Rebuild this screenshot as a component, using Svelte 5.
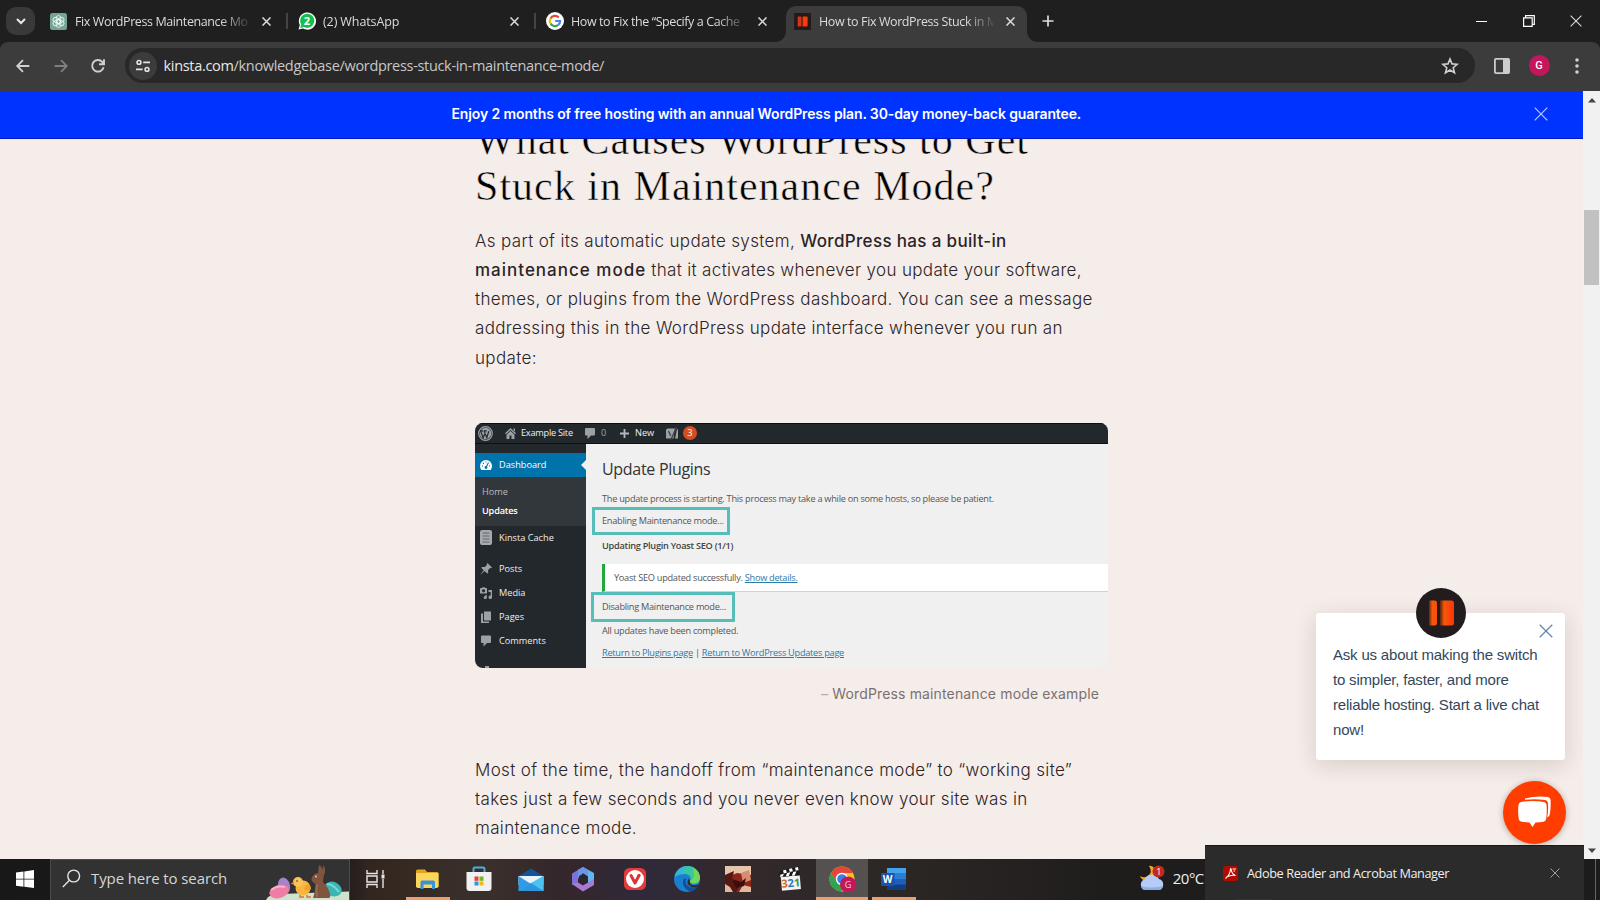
<script>
    const tabs = [
        { icon: 'gpt', title: 'Fix WordPress Maintenance Mo' },
        { icon: 'whatsapp', title: '(2) WhatsApp' },
        { icon: 'google', title: 'How to Fix the “Specify a Cache' },
        { icon: 'kinsta', title: 'How to Fix WordPress Stuck in M', active: true },
    ];

    const menu = ['Posts', 'Media', 'Pages', 'Comments'];

    const apps = [
        { name: 'taskview' },
        { name: 'explorer', open: true },
        { name: 'store' },
        { name: 'mail' },
        { name: 'office' },
        { name: 'vivaldi' },
        { name: 'edge' },
        { name: 'photo' },
        { name: 'player' },
        { name: 'chrome', open: true, focused: true },
        { name: 'word', open: true },
    ];
</script>

{#snippet cross(size, width)}
    <svg width={size} height={size} viewBox="0 0 10 10" fill="none" stroke="currentColor" stroke-width={width}><path d="M.5.5l9 9M9.5.5l-9 9"/></svg>
{/snippet}

<div class="screen">
    <header class="tabstrip">
        <div class="tab-search">
            <svg width="10" height="7" viewBox="0 0 10 7" fill="none" stroke="#e8e8e8" stroke-width="2"><path d="M1 1l4 4 4-4"/></svg>
        </div>
        {#each tabs as tab}
            <div class="tab" class:tab--active={tab.active}>
                <div class="tab__icon">
                    {#if tab.icon === 'gpt'}
                        <svg width="17" height="17" viewBox="0 0 17 17"><rect width="17" height="17" rx="2.5" fill="#74a594"/><g fill="none" stroke="#e6f3ee" stroke-width=".9"><rect x="6.2" y="2.6" width="4.6" height="7.6" rx="2.3"/><rect x="6.2" y="2.6" width="4.6" height="7.6" rx="2.3" transform="rotate(60 8.5 8.5)"/><rect x="6.2" y="2.6" width="4.6" height="7.6" rx="2.3" transform="rotate(120 8.5 8.5)"/><rect x="6.2" y="2.6" width="4.6" height="7.6" rx="2.3" transform="rotate(180 8.5 8.5)"/><rect x="6.2" y="2.6" width="4.6" height="7.6" rx="2.3" transform="rotate(240 8.5 8.5)"/><rect x="6.2" y="2.6" width="4.6" height="7.6" rx="2.3" transform="rotate(300 8.5 8.5)"/></g></svg>
                    {:else if tab.icon === 'whatsapp'}
                        <svg width="18" height="18" viewBox="0 0 18 18"><path d="M.5 17.5L1.8 13A8.6 8.6 0 1 1 5 16.4z" fill="#fff"/><circle cx="9.2" cy="8.8" r="7.1" fill="#16bf4c"/><path d="M2.2 15.9l1-4 3 3z" fill="#16bf4c"/><text x="9" y="12.7" text-anchor="middle" font-size="11" font-weight="700" fill="#fff">2</text></svg>
                    {:else if tab.icon === 'google'}
                        <svg width="18" height="18" viewBox="0 0 18 18"><circle cx="9" cy="9" r="9" fill="#fff"/><g fill="none" stroke-width="2.2"><path d="M4.6 6.4A5.1 5.1 0 0 1 12.7 5.4" stroke="#ea4335"/><path d="M4.6 11.6a5.1 5.1 0 0 1 0-5.2" stroke="#fbbc05"/><path d="M12.4 12.8a5.1 5.1 0 0 1-7.8-1.2" stroke="#34a853"/><path d="M9.2 9h4.9a5.1 5.1 0 0 1-1.7 3.8" stroke="#4285f4"/></g></svg>
                    {:else}
                        <svg width="17" height="17" viewBox="0 0 17 17"><rect width="17" height="17" fill="#25191b"/><path d="M3.7 3.4h2.7q1.1 0 1.1 1.1v8q0 1.1-1.1 1.1H3.7z" fill="#d63413"/><path d="M8.6 3.4h4q1 0 1 1v8.2q0 1-1 1h-4z" fill="#f93a0c"/></svg>
                    {/if}
                </div>
                <span class="tab__title">{tab.title}</span>
                <span class="tab__close">{@render cross(9, 1.7)}</span>
            </div>
        {/each}
        <svg class="tab-new" width="12" height="12" viewBox="0 0 12 12" stroke="#ddd" stroke-width="1.7"><path d="M6 .5v11M.5 6h11"/></svg>
        <div class="window-buttons">
            <svg width="11" height="11" viewBox="0 0 11 11" stroke="#fff"><path d="M0 5.5h11"/></svg>
            <svg width="12" height="12" viewBox="0 0 12 12" fill="none" stroke="#fff" stroke-width="1.2"><path d="M.6 2.8h8.6v8.6H.6zM2.6 2.8V.7h8.7v8.6H9.2"/></svg>
            {@render cross(12, .9)}
        </div>
    </header>

    <div class="toolbar">
        <svg class="nav" width="20" height="20" viewBox="0 0 20 20" fill="none" stroke="#d0d0d0" stroke-width="1.8"><path d="M16.3 10H4.5M10 4.2L4.2 10l5.8 5.8"/></svg>
        <svg class="nav" width="20" height="20" viewBox="0 0 20 20" fill="none" stroke="#7f7f7f" stroke-width="1.8"><path d="M3.7 10h11.8M10 4.2l5.8 5.8-5.8 5.8"/></svg>
        <svg class="nav" width="20" height="20" viewBox="0 0 20 20" fill="none" stroke="#d0d0d0" stroke-width="1.9"><path d="M15.6 11.2A5.8 5.8 0 1 1 14.2 5.8L16 7.8M16 3.2v5h-5"/></svg>
        <div class="omnibox">
            <div class="omnibox__site">
                <svg width="14" height="14" viewBox="0 0 14 14" fill="none" stroke="#e3e3e3" stroke-width="1.6"><circle cx="3" cy="3.4" r="1.9"/><path d="M7.2 3.4H14M0 10.4h6.6"/><circle cx="11" cy="10.4" r="1.9"/></svg>
            </div>
            <span class="omnibox__url"><b>kinsta.com</b>/knowledgebase/wordpress-stuck-in-maintenance-mode/</span>
            <svg width="18" height="18" viewBox="0 0 18 18" fill="none" stroke="#d0d0d0" stroke-width="1.6"><path d="M9 2l2 4.9 5.2.4-4 3.4 1.3 5.1L9 13l-4.5 2.8 1.3-5.1-4-3.4L7 6.9z"/></svg>
        </div>
        <svg class="panel" width="16" height="16" viewBox="0 0 16 16"><rect x=".9" y=".9" width="14.2" height="14.2" rx="1" fill="none" stroke="#ccc" stroke-width="1.8"/><path d="M9 1h6v14H9z" fill="#ccc"/></svg>
        <div class="avatar">G</div>
        <svg class="dots" width="4" height="16" viewBox="0 0 4 16" fill="#d0d0d0"><circle cx="2" cy="2" r="1.8"/><circle cx="2" cy="8" r="1.8"/><circle cx="2" cy="14" r="1.8"/></svg>
    </div>

    <div class="viewport">
        <main class="page">
            <div class="banner">
                <span class="banner__text">Enjoy 2 months of free hosting with an annual WordPress plan. 30-day money-back guarantee.</span>
                <span class="banner__close">{@render cross(14, .8)}</span>
            </div>

            <article>
                <h2>What Causes WordPress to Get<br>Stuck in Maintenance Mode?</h2>
                <p>
                    As part of its automatic update system, <strong>WordPress has a built-in</strong><br>
                    <strong class="wide">maintenance mode</strong> that it activates whenever you update your software,<br>
                    themes, or plugins from the WordPress dashboard. You can see a message<br>
                    addressing this in the WordPress update interface whenever you run an<br>
                    update:
                </p>

                <figure>
                    <div class="wp">
                        <div class="wp__bar">
                            <svg width="15" height="15" viewBox="0 0 15 15"><circle cx="7.5" cy="7.5" r="6.8" fill="none" stroke="#9ca1a6" stroke-width="1.2"/><circle cx="7.5" cy="7.5" r="5.7" fill="#9ca1a6"/><path d="M2.5 4.8l2.7 7 2-5.2M6 4.8l2.8 7 2-6.5M2 4.9h3M5.6 4.9h3.2" fill="none" stroke="#23282d" stroke-width="1.2"/></svg>
                            <svg class="wp__home" width="11" height="11" viewBox="0 0 11 11" fill="#9ca1a6"><path d="M5.5 0L11 5.3l-1 1L5.5 2 1 6.3l-1-1zM8.5.5H10v3L8.5 2z"/><path d="M5.5 3L9.5 6.7V11h-3V7.5h-2V11h-3V6.7z"/></svg>
                            <span class="wp__site">Example Site</span>
                            <svg width="10" height="11" viewBox="0 0 10 11" fill="#9ca1a6"><path d="M1 0h8q1 0 1 1v5.5q0 1-1 1H6L2.5 11V7.5H1q-1 0-1-1V1q0-1 1-1z"/></svg>
                            <span class="wp__count">0</span>
                            <svg width="9" height="9" viewBox="0 0 9 9" stroke="#b4b8bb" stroke-width="1.8"><path d="M4.5 0v9M0 4.5h9"/></svg>
                            <span class="wp__new">New</span>
                            <svg class="wp__yoast" width="13" height="13" viewBox="0 0 13 13"><path d="M2 1.5h7L7.5 11.5H0v-8q0-2 2-2zM11 2q1 0 1 1v8.5H9z" fill="#9ca1a6"/><path d="M2.5 4l2.3 5M10.5 0L6 10.5q-.7 1.8-2.5 2" stroke="#3e4348" stroke-width="1.3" fill="none"/></svg>
                            <span class="wp__badge">3</span>
                        </div>
                        <div class="wp__body">
                            <nav class="wp__side">
                                <div class="wp__item wp__item--current">
                                    <svg width="12" height="12" viewBox="0 0 12 12"><path d="M0 7a6 6 0 0 1 12 0q0 2-1.3 4H1.3Q0 9 0 7z" fill="#fff"/><path d="M6 8.5L8.5 3.5M2 7h1M9 7h1M3 4l.8.8M6 2.5v1" stroke="#0073aa" stroke-width="1.1"/><circle cx="6" cy="8.5" r="1.4" fill="#0073aa"/></svg>
                                    Dashboard
                                </div>
                                <div class="wp__sub">
                                    <span>Home</span>
                                    <b>Updates</b>
                                </div>
                                <div class="wp__item wp__item--kinsta">
                                    <svg width="12" height="15" viewBox="0 0 12 15"><rect width="12" height="15" rx="2" fill="#a7aaae"/><path d="M2.5 3h7M2.5 6h7M2.5 9h7M2.5 12h7" stroke="#63686d"/></svg>
                                    Kinsta Cache
                                </div>
                                {#each menu as item}
                                    <div class="wp__item">
                                        <svg width="12" height="12" viewBox="0 0 12 12" fill="#9ca1a6">
                                            {#if item === 'Posts'}
                                                <path d="M7.5 0L12 4.5l-1 .8-1-.2-2 2.2.2 2.4-1 .9-2.6-2.5L0 12l3.7-4.8L1.2 4.8l1-.9 2.6.2L7 2l-.3-1z"/>
                                            {:else if item === 'Media'}
                                                <path d="M1 1h1l.6-.8h2L5.2 1H7v5.500H0V2q0-1 1-1zm2.500 1.200a1.600 1.600 0 1 0 .1 0z" fill-rule="evenodd"/><path d="M8.500 3H12v7.300a1.700 1.700 0 1 1-1.300-1.600V5H8.500zM5.500 8h1.300v2.500a1.500 1.500 0 1 1-1.300-1.400z"/>
                                            {:else if item === 'Pages'}
                                                <path d="M4 .5h7v9H4zM1 2.5h2v8h6V12H1z"/>
                                            {:else}
                                                <path d="M2 .5h8q1 0 1 1V7q0 1-1 1H7l-3.5 3.5V8H2Q1 8 1 7V1.5q0-1 1-1z"/>
                                            {/if}
                                        </svg>
                                        {item}
                                    </div>
                                {/each}
                                <i class="wp__cut"></i>
                            </nav>
                            <section class="wp__main">
                                <h3>Update Plugins</h3>
                                <div class="wp__line">The update process is starting. This process may take a while on some hosts, so please be patient.</div>
                                <div class="wp__mark">Enabling Maintenance mode...</div>
                                <div class="wp__line wp__line--bold">Updating Plugin Yoast SEO (1/1)</div>
                                <div class="wp__notice">Yoast SEO updated successfully. <u>Show details.</u></div>
                                <div class="wp__mark wp__mark--off">Disabling Maintenance mode...</div>
                                <div class="wp__line">All updates have been completed.</div>
                                <div class="wp__line wp__line--links"><u>Return to Plugins page</u> | <u>Return to WordPress Updates page</u></div>
                            </section>
                        </div>
                    </div>
                    <figcaption><i>–</i> WordPress maintenance mode example</figcaption>
                </figure>

                <p>
                    Most of the time, the handoff from “maintenance mode” to “working site”<br>
                    takes just a few seconds and you never even know your site was in<br>
                    maintenance mode.
                </p>
            </article>

            <aside class="chat">
                <div class="chat__logo">
                    <svg width="26" height="26" viewBox="0 0 26 26">
                        <defs>
                            <linearGradient id="bar1"><stop offset="0" stop-color="#5a2413"/><stop offset=".4" stop-color="#f25a0a"/><stop offset="1" stop-color="#ff4a0a"/></linearGradient>
                            <linearGradient id="bar2"><stop offset="0" stop-color="#5a2413"/><stop offset=".3" stop-color="#f55a08"/><stop offset="1" stop-color="#ff3208"/></linearGradient>
                        </defs>
                        <path d="M1 .5h5.5q2.500 0 2.500 2.500v20q0 2.500-2.500 2.500H1z" fill="url(#bar1)"/>
                        <path d="M12 .5h11.5Q26 .5 26 3v20q0 2.500-2.500 2.500H12z" fill="url(#bar2)"/>
                    </svg>
                </div>
                <span class="chat__close">{@render cross(14, .9)}</span>
                <p class="chat__text">Ask us about making the switch<br>to simpler, faster, and more<br>reliable hosting. Start a live chat<br>now!</p>
            </aside>
            <div class="chat-button">
                <svg width="33" height="32" viewBox="0 0 33 32" fill="#fff"><path d="M7 2.5Q18-.5 30 1q2.500.4 2.600 3 .4 7-.7 14-.4 2.700-2.600 3.400Q30.500 14 30 7.500 29.900 4.500 27 4 17 2.600 7 3.800z"/><path d="M3 6q11-2 23 0 2.300.4 2.500 2.800.7 7-.3 14-.3 2.500-2.700 2.900-3.400.6-8 .8L14.500 31l-3-4.500q-4.500-.2-8-.8Q1 25.300.7 22.800-.3 15.800.5 8.800.7 6.400 3 6z"/></svg>
            </div>
        </main>
        <div class="scrollbar">
            <svg width="8" height="5" viewBox="0 0 8 5" fill="#444"><path d="M4 0l4 4.500H0z"/></svg>
            <div class="scrollbar__thumb"></div>
            <svg width="8" height="5" viewBox="0 0 8 5" fill="#444"><path d="M4 5L0 .5h8z"/></svg>
        </div>
    </div>

    <footer class="taskbar">
        <div class="start">
            <svg width="18" height="18" viewBox="0 0 18 18" fill="#fff"><path d="M0 2.500l7.500-1v7.200H0zM8.300 1.400L18 0v8.700H8.300zM0 9.500h7.500v7.200l-7.500-1zM8.300 9.500H18V18l-9.700-1.300z"/></svg>
        </div>
        <div class="search">
            <svg class="search__glass" width="19" height="19" viewBox="0 0 19 19" fill="none" stroke="#e6e6e6" stroke-width="1.4"><circle cx="11.7" cy="7" r="5.9"/><path d="M7.5 11.3L.8 18"/></svg>
            <span>Type here to search</span>
            <svg class="search__art" width="83" height="36" viewBox="0 0 83 36">
                <path d="M0 36Q2 30 14 30L83 27.500V36z" fill="#cfe3cb"/>
                <ellipse cx="18" cy="22" rx="6" ry="8.500" fill="#a982c9" transform="rotate(-12 18 22)"/>
                <ellipse cx="13" cy="27.500" rx="10" ry="6.500" fill="#ef7da6" transform="rotate(-18 13 27)"/>
                <path d="M5 26q6-5 14-3" stroke="#f9b2cb" stroke-width="2" fill="none"/>
                <ellipse cx="67" cy="25" rx="9" ry="7" fill="#38b7b5" transform="rotate(24 67 25)"/>
                <path d="M61 20q6 0 12 8" stroke="#7cd6d2" stroke-width="2" fill="none"/>
                <path d="M34 31v2h4M41 31v2h4" stroke="#d9772d" stroke-width="1.5" fill="none"/>
                <circle cx="37" cy="24" r="7.5" fill="#f8b640"/><circle cx="32" cy="18" r="5" fill="#fbc355"/><path d="M27.500 18l-3 1.500 3.500 1.500z" fill="#ea7c23"/><circle cx="31" cy="17" r=".8" fill="#432"/>
                <path d="M40 21q5-1 5 4-3 3-7 0z" fill="#eda02c"/>
                <path d="M47 34q2-5 2.500-14Q44 17 46 13q3-4 6-4L53 1q3 1 3.500 5l1-5q3 5 .5 10-1 5-1 7 6 6 7 12 1 3-1 4z" fill="#80543f"/>
                <path d="M51 20q-1 8 0 13" stroke="#996a52" stroke-width="2" fill="none"/><circle cx="50" cy="12.500" r=".9" fill="#f1ddcf"/>
            </svg>
        </div>
        <div class="apps">
            {#each apps as app}
                <div class="app" class:app--open={app.open} class:app--focused={app.focused}>
                    <svg width="26" height="26" viewBox="0 0 26 26">
                        {#if app.name === 'taskview'}
                            <path d="M4 4v3.500h10V4M4 22v-3.500h10V22M4 10h10v6H4zM20 4v4M20 13v9" stroke="#e6e6e6" stroke-width="1.4" fill="none"/><rect x="18.5" y="8.5" width="3" height="4" fill="#e6e6e6"/>
                        {:else if app.name === 'explorer'}
                            <path d="M1 5q0-1.500 1.500-1.500H10l2 2.500h10q1.500 0 1.500 1.500V21H1z" fill="#e2a51d"/><path d="M1 7h22.500v13q0 2-2 2H3q-2 0-2-2z" fill="#fbd65f"/><path d="M5.500 23v-7q0-1.500 1.500-1.500h11.500q1.500 0 1.500 1.500v7h-3v-4.500H8.500V23z" fill="#3992d6"/>
                        {:else if app.name === 'store'}
                            <path d="M7.500 7V3q0-1.500 1.500-1.500h8Q18.500 1.500 18.500 3v4" fill="none" stroke="#45b0e4" stroke-width="2"/><path d="M.5 6h25v16q0 3-3 3h-19q-3 0-3-3z" fill="#f1f1f2"/><path d="M8.500 10.500H12.500v4.300h-4z" fill="#e8432e"/><path d="M13.500 10.500h4v4.300h-4z" fill="#70b52a"/><path d="M8.500 15.500h4v4h-4z" fill="#1f9ee0"/><path d="M13.500 15.500h4v4h-4z" fill="#f8b616"/>
                        {:else if app.name === 'mail'}
                            <path d="M.5 10L13 2.500 25.500 10v5H.5z" fill="#0f5597"/><path d="M.5 10h25v9H.5z" fill="#eaf3fa"/><path d="M.5 10l12.500 8 12.500-8v15H.5z" fill="#2f9be6"/><path d="M.5 25L13 17l12.500-7v15z" fill="#4cc2f0"/><path d="M13 17l12.500 8H.5z" fill="#2c96de"/>
                        {:else if app.name === 'office'}
                            <path d="M13 1l11 6v8l-6 1.500V10L13 7z" fill="#62b6ee"/><path d="M13 1v6L8 10v8l-6 1V7.500z" fill="#7d70d6"/><path d="M2 18l6-1.500 5 3L24 13v6l-11 6.500z" fill="#a77ad4"/><path d="M13 1L8 3.700v9L13 7l5 3.500V4z" fill="#6c94e6"/><path d="M9 10l4-2 4.500 2.500v5L13 18l-4-2.500z" fill="#2c2633"/>
                        {:else if app.name === 'vivaldi'}
                            <rect x="2" y="2" width="22" height="22" rx="5.5" fill="#e33b3b"/><circle cx="13" cy="13" r="9" fill="#fff"/><path d="M9 9.500l4 7.500 3.500-6.500" fill="none" stroke="#d93535" stroke-width="3" stroke-linecap="round" stroke-linejoin="round"/><circle cx="17" cy="9.5" r="1.7" fill="#d93535"/>
                        {:else if app.name === 'edge'}
                            <circle cx="13" cy="13" r="13" fill="#1b7fd0"/><path d="M1 11A12.500 12.500 0 0 1 25.900 11.500q.3 5.500-5.500 6-4.500.3-4.500-2.500 1-1.500.7-3-.7-3.600-5.600-4Q4 7.800 1 11z" fill="#39c5a0"/><path d="M1 11A12.500 12.500 0 0 1 16 .5Q8 1 9 8 3 8 1 11z" fill="#35b4e2"/><path d="M19 1.500q6.500 3.500 7 10-.3 6-6 6-4 0-4-2.500 6-2 3-13.500z" fill="#72d85a"/><path d="M9.500 13q-2.500 8 6 12.500Q21 25.500 24 20q-6 3-10 0-4-3-1.500-7.500z" fill="#114f96"/><path d="M16 15q-1 4 4 4.300 3 0 5-1.300-1 2.500-2 3-6 1-9-2.500-1.500-3 1-6z" fill="#302a2d"/>
                        {:else if app.name === 'photo'}
                            <path d="M0 0h26v26H0z" fill="#8d251b"/><path d="M0 0h26v9L12 7 0 12z" fill="#e6c5ad"/><path d="M0 9l9-4-2 9 8 6-4 6H0z" fill="#551812"/><path d="M16 7l8-3 2 10-8 3z" fill="#d88d70"/><path d="M0 18l5 3 3 5H0zM18 19l8 2v5H14z" fill="#dfb89b"/><path d="M7 13l9 3 5-4-2 8-8 2z" fill="#360f0e"/>
                        {:else if app.name === 'player'}
                            <g transform="rotate(-5 13 13)"><path d="M4 10h19v14H4z" fill="#f2f2f2"/><path d="M3 6h20v4H3z" fill="#181818"/><path d="M5 6h3L6 10H3zM11 6h3l-2 4H9zM17 6h3l-2 4h-3z" fill="#fff"/><text x="13.5" y="21" text-anchor="middle" font-size="11" font-weight="700" fill="#d16c24">3<tspan fill="#2b78b8">2</tspan><tspan fill="#3f9639">1</tspan></text></g><path d="M3 5L22 .5v3.500L4 8.500z" fill="#181818"/><path d="M6 4.500l3-.8.8 3-3 .8zM12 3l3-.8.8 3-3 .8zM18 1.700l3-.7.5 3-2.700.7z" fill="#fff"/>
                        {:else if app.name === 'chrome'}
                            <circle cx="13" cy="13" r="12.5" fill="#fbc116"/><path d="M2 7A12.500 12.500 0 0 1 24 7H13L7.500 16z" fill="#e8453a"/><path d="M2 7a12.500 12.500 0 0 0 10 18.500L18 16H8z" fill="#31a350"/><circle cx="13" cy="13" r="6.2" fill="#fff"/><circle cx="13" cy="13" r="4.8" fill="#3b7de9"/><circle cx="19" cy="18.5" r="8" fill="#c2185b"/><text x="19" y="21.8" text-anchor="middle" font-size="9" fill="#f3cfdc">G</text>
                        {:else}
                            <path d="M6 2h19v22H6z" fill="#1f5fb8"/><path d="M6 2h19v5.500H6z" fill="#43a2ec"/><path d="M6 7.500h19V13H6z" fill="#2b7cd3"/><path d="M6 18.500h19V24H6z" fill="#123f84"/><rect y="7" width="13.5" height="13" rx="1.2" fill="#1a52ae"/><text x="6.7" y="17" text-anchor="middle" font-size="10" font-weight="700" fill="#fff">W</text>
                        {/if}
                    </svg>
                </div>
            {/each}
        </div>
        <div class="weather">
            <svg width="26" height="26" viewBox="0 0 26 26"><path d="M10 1q4 6-1 10-4 2.500-8 0 2 6 10 5 9-3 5-12-3-4-6-3z" fill="#f0a72d"/><path d="M6 25a5.500 5.500 0 0 1-.5-10.500A8 8 0 0 1 20 14a5.700 5.700 0 0 1 0 11z" fill="#b5cdf6"/><path d="M2 21q10 3 22 0-1 4-4 4H6q-3 0-4-4z" fill="#8eacea"/><circle cx="19.5" cy="6.5" r="6" fill="#c22b1c"/><text x="19.5" y="10" text-anchor="middle" font-size="9" fill="#fff">1</text></svg>
            <span>20°C</span>
        </div>
        <i class="show-desktop"></i>
    </footer>

    <div class="toast">
        <svg class="toast__icon" width="15" height="15" viewBox="0 0 15 15"><rect width="15" height="15" rx="2.5" fill="#b30b00"/><path d="M2.500 12.500Q7 9 7.500 3q0-1 .6 0 .4 5 4.400 6.500-4-1-9 1.500M9.500 3H13M10.500 5H12" fill="none" stroke="#fff" stroke-width="1.1"/></svg>
        <span>Adobe Reader and Acrobat Manager</span>
        <span class="toast__close">{@render cross(10, 1)}</span>
        <i class="toast__logo"></i>
    </div>
</div>

<style>
    :global(body) {
        overflow: hidden;
    }

    .screen {
        position: relative;
        width: 1600px;
        height: 900px;
        overflow: hidden;
        display: flex;
        flex-direction: column;
        font-family: "Open Sans", "Noto Sans", sans-serif;
        background: #1f1f1f;
    }
    svg {
        display: block;
        flex: none;
    }

    /* browser chrome */
    .tabstrip {
        height: 42px;
        display: flex;
        align-items: center;
        background: #1f1f1f;
        color: #dcdcdc;
        flex: none;
    }
    .tab-search {
        width: 29px;
        height: 28px;
        margin: 0 7px 0 6px;
        border-radius: 10px;
        background: #393939;
        display: flex;
        align-items: center;
        justify-content: center;
    }
    .tab {
        position: relative;
        box-sizing: border-box;
        width: 248px;
        height: 36px;
        margin-top: 6px;
        padding: 0 19px 6px 8px;
        display: flex;
        align-items: center;
        font-size: 12.5px;
    }
    .tab:nth-child(2)::after, .tab:nth-child(3)::after {
        content: "";
        position: absolute;
        right: 2px;
        top: 7px;
        width: 2px;
        height: 16px;
        background: #444;
    }
    .tab--active {
        width: 241px;
        padding-right: 12px;
        background: #3c3c3c;
        border-radius: 10px 10px 0 0;
    }
    .tab--active::before, .tab--active::after {
        content: "";
        position: absolute;
        bottom: 0;
        width: 10px;
        height: 10px;
    }
    .tab--active::before {
        left: -10px;
        background: radial-gradient(circle at 0 0, transparent 9.5px, #3c3c3c 10px);
    }
    .tab--active::after {
        right: -10px;
        background: radial-gradient(circle at 100% 0, transparent 9.5px, #3c3c3c 10px);
    }
    .tab__icon {
        width: 25px;
    }
    .tab__title {
        width: 175px;
        overflow: hidden;
        white-space: nowrap;
        letter-spacing: -.4px;
        -webkit-mask-image: linear-gradient(90deg, #000 145px, transparent 178px);
        mask-image: linear-gradient(90deg, #000 145px, transparent 178px);
    }
    .tab:nth-child(3) .tab__title {
        letter-spacing: -.1px;
    }
    .tab__close {
        margin-left: auto;
    }
    .tab-new {
        margin-left: 15px;
    }
    .window-buttons {
        margin-left: auto;
        padding-right: 18px;
        display: flex;
        align-items: center;
        gap: 35.5px;
    }

    .toolbar {
        box-sizing: border-box;
        height: 48.500px;
        padding: 0 0 1px 13px;
        display: flex;
        align-items: center;
        background: #3c3c3c;
        border-radius: 8px 8px 0 0;
        flex: none;
    }
    .nav {
        margin-right: 17.5px;
    }
    .omnibox {
        box-sizing: border-box;
        width: 1350px;
        height: 35px;
        margin-left: -1px;
        padding: 0 16px 0 4px;
        border-radius: 18px;
        background: #282828;
        display: flex;
        align-items: center;
    }
    .omnibox__site {
        width: 28px;
        height: 28px;
        border-radius: 50%;
        background: #3c3c3c;
        display: flex;
        align-items: center;
        justify-content: center;
    }
    .omnibox__url {
        flex: 1;
        padding-left: 7px;
        font-size: 14.5px;
        letter-spacing: -.32px;
        color: #c7c7c7;
    }
    .omnibox__url b {
        font-weight: 400;
        color: #e8e8e8;
    }
    .panel {
        margin-left: 19px;
    }
    .avatar {
        width: 21px;
        height: 21px;
        margin: 0 25px 0 19px;
        border-radius: 50%;
        background: #c2185b;
        color: #fff;
        font: 500 11px/21px Roboto, sans-serif;
        text-align: center;
    }

    /* page */
    .viewport {
        height: 768px;
        display: flex;
        flex: none;
    }
    .page {
        position: relative;
        width: 1583px;
        overflow: hidden;
        background: #f5edea;
    }
    .banner {
        position: relative;
        z-index: 1;
        box-sizing: border-box;
        height: 48.500px;
        padding: 0 35px 0 451.500px;
        display: flex;
        align-items: center;
        justify-content: space-between;
        background: #0033ff;
        border-bottom: 1px solid #0518c8;
        color: #fff;
    }
    .banner__text {
        font: 600 14px/20px Inter, sans-serif;
        letter-spacing: -.12px;
    }
    .banner__close {
        opacity: .75;
    }
    article {
        width: 633px;
        margin-left: 475px;
        color: #2c2427;
    }
    h2 {
        margin: -21px 0 0;
        font: 400 42px/45.500px "Liberation Serif", serif;
        letter-spacing: 1.02px;
        color: #000;
        -webkit-text-stroke: .5px #f5edea;
        white-space: nowrap;
    }
    p {
        margin: 17.500px 0 0;
        font: 300 17px/29.250px Inter, sans-serif;
        letter-spacing: .34px;
        white-space: nowrap;
    }
    strong {
        font-weight: 500;
    }
    .wide {
        letter-spacing: 1px;
    }
    figure {
        margin: 50px 0 51px;
    }
    figcaption {
        margin: 15px 9px 0 0;
        font: 400 14px/22px Inter, sans-serif;
        letter-spacing: .14px;
        color: #7c706e;
        text-align: right;
    }
    figcaption i {
        color: #b9aeab;
    }

    /* wordpress dashboard inside the figure */
    .wp {
        height: 245px;
        border-radius: 8px;
        overflow: hidden;
        display: flex;
        flex-direction: column;
        background: #f0f0f0;
        font-size: 9.200px;
        line-height: 14px;
    }
    .wp__bar {
        box-sizing: border-box;
        height: 21px;
        padding-left: 3px;
        border-top: 1px solid #0d1013;
        border-bottom: 1px solid #0d1013;
        display: flex;
        align-items: center;
        background: #23282d;
        color: #eee;
        flex: none;
    }
    .wp__home {
        margin: 0 5px 0 12px;
    }
    .wp__site {
        width: 64px;
        letter-spacing: -.25px;
    }
    .wp__count {
        width: 25px;
        padding-left: 6px;
        color: #9ca1a6;
        box-sizing: border-box;
    }
    .wp__new {
        width: 37px;
        padding-left: 6px;
        box-sizing: border-box;
    }
    .wp__yoast {
        margin-right: 4px;
    }
    .wp__badge {
        width: 14px;
        height: 14px;
        border-radius: 50%;
        background: #d54e21;
        color: #fff;
        text-align: center;
    }
    .wp__body {
        flex: 1;
        display: flex;
    }
    .wp__side {
        width: 111px;
        padding-top: 9px;
        background: #23282d;
        box-sizing: border-box;
        color: #eee;
        overflow: hidden;
    }
    .wp__item {
        position: relative;
        height: 24px;
        padding-left: 5px;
        display: flex;
        align-items: center;
        gap: 7px;
    }
    .wp__item--current {
        background: #0073aa;
        color: #fff;
    }
    .wp__item--current::after {
        content: "";
        position: absolute;
        right: 0;
        border: 5px solid transparent;
        border-right-color: #f0f0f0;
        border-left: 0;
    }
    .wp__item--kinsta {
        margin-bottom: 7px;
    }
    .wp__sub {
        height: 49px;
        padding: 8px 0 0 7px;
        box-sizing: border-box;
        display: flex;
        flex-direction: column;
        gap: 5px;
        background: #32373c;
        color: #b4b9be;
    }
    .wp__sub b {
        color: #fff;
        font-weight: 600;
        letter-spacing: -.2px;
    }
    .wp__cut {
        display: block;
        width: 4px;
        height: 2px;
        margin: 13px 0 0 10px;
        background: #9ca1a6;
    }
    .wp__main {
        flex: 1;
        padding-left: 16px;
        display: flex;
        flex-direction: column;
        align-items: flex-start;
        color: #555;
        white-space: nowrap;
        letter-spacing: -.27px;
    }
    h3 {
        margin: 15px 0 13px;
        font-weight: 400;
        font-size: 16px;
        line-height: 20px;
        letter-spacing: -.3px;
        color: #333;
    }
    .wp__mark {
        box-sizing: border-box;
        width: 138px;
        height: 28px;
        margin: 1px 0 4px -10px;
        padding-left: 7px;
        border: 3px solid #56bdb9;
        line-height: 21px;
    }
    .wp__mark--off {
        width: 144px;
        height: 30px;
        margin: 0 0 2px -11px;
        padding-left: 8px;
        line-height: 24px;
        z-index: 1;
    }
    .wp__line--bold {
        font-weight: 600;
        color: #444;
    }
    .wp__notice {
        align-self: stretch;
        box-sizing: border-box;
        height: 28px;
        margin-top: 11px;
        padding-left: 9px;
        border-left: 3px solid #1fa83c;
        border-bottom: 1px solid #d2d2d2;
        background: #fff;
        line-height: 27px;
    }
    .wp__line--links {
        margin-top: 8px;
    }
    u {
        color: #2b7aa8;
    }

    .chat {
        position: absolute;
        left: 1316px;
        top: 522.500px;
        width: 249px;
        height: 147px;
        box-sizing: border-box;
        padding: 29px 0 0 17px;
        border-radius: 3px;
        background: #fff;
        box-shadow: 0 5px 22px rgba(60, 30, 20, .16);
    }
    .chat__logo {
        position: absolute;
        left: 100px;
        top: -25px;
        width: 50px;
        height: 50px;
        border-radius: 50%;
        background: #231c1f;
        display: flex;
        align-items: center;
        justify-content: center;
    }
    .chat__close {
        position: absolute;
        right: 12px;
        top: 11px;
        color: #6287ae;
    }
    .chat__text {
        margin: 0;
        font: 400 15px/25px "Liberation Sans", sans-serif;
        letter-spacing: -.19px;
        color: #33475b;
    }
    .chat-button {
        position: absolute;
        left: 1503px;
        top: 690px;
        width: 63px;
        height: 63px;
        border-radius: 50%;
        background: #ff3d00;
        box-shadow: 0 1px 6px rgba(0, 0, 0, .3);
        display: flex;
        align-items: center;
        justify-content: center;
    }

    .scrollbar {
        width: 17px;
        padding: 7px 0 6px;
        box-sizing: border-box;
        display: flex;
        flex-direction: column;
        align-items: center;
        background: #f1f1f1;
    }
    .scrollbar__thumb {
        width: 15px;
        height: 75px;
        margin: 107px 0 auto;
        background: #c1c1c1;
    }

    /* taskbar */
    .taskbar {
        flex: 1;
        display: flex;
        background: linear-gradient(90deg, #181818 0, #1c1b1b 340px, #33261f 370px, #3a302b 480px, #34272b 560px, #30293a 650px, #33292b 730px, #2c2725 900px, #1f1d1c 1100px, #1c1c1c 1600px);
    }
    .start {
        width: 50px;
        display: flex;
        align-items: center;
        justify-content: center;
    }
    .search {
        box-sizing: border-box;
        width: 300px;
        border: 1px solid #4b4b4b;
        border-bottom: 0;
        padding-left: 11px;
        background: #323232;
        display: flex;
        align-items: center;
        color: #d6d6d6;
        font-size: 15px;
        letter-spacing: -.1px;
    }
    .search span {
        padding-bottom: 3px;
    }
    .search__glass {
        margin: 0 10px 2px 0;
    }
    .search__art {
        margin-left: auto;
        align-self: flex-end;
    }
    .apps {
        display: flex;
    }
    .app {
        box-sizing: border-box;
        width: 51.800px;
        display: flex;
        align-items: center;
        justify-content: center;
    }
    .app--open {
        padding-top: 2px;
        border-bottom: 3px solid #eb9f6d;
    }
    .app--open:not(.app--focused) {
        margin: 0 4px;
        width: 43.800px;
    }
    .app--focused {
        background: #555150;
    }
    .weather {
        margin-left: 219px;
        padding-bottom: 2px;
        display: flex;
        align-items: center;
        gap: 8px;
        color: #eee;
        font-size: 15px;
        letter-spacing: -.5px;
    }
    .show-desktop {
        margin-left: auto;
        width: 4px;
        border-left: 1px solid #666;
    }

    .toast {
        position: absolute;
        left: 1205px;
        top: 845px;
        width: 379px;
        height: 55px;
        box-sizing: border-box;
        padding: 0 24px 0 18px;
        border-top: 1px solid #1a1a1a;
        background: #2b2b2b;
        display: flex;
        align-items: center;
        color: #f0f0f0;
        font-size: 12.700px;
        letter-spacing: -.4px;
    }
    .toast__icon {
        margin-right: 9px;
    }
    .toast__close {
        margin-left: auto;
        color: #a0a0a0;
    }
    .toast__logo {
        position: absolute;
        left: 30px;
        bottom: 0;
        width: 37px;
        height: 1px;
        background: #6b1c16;
    }
</style>
